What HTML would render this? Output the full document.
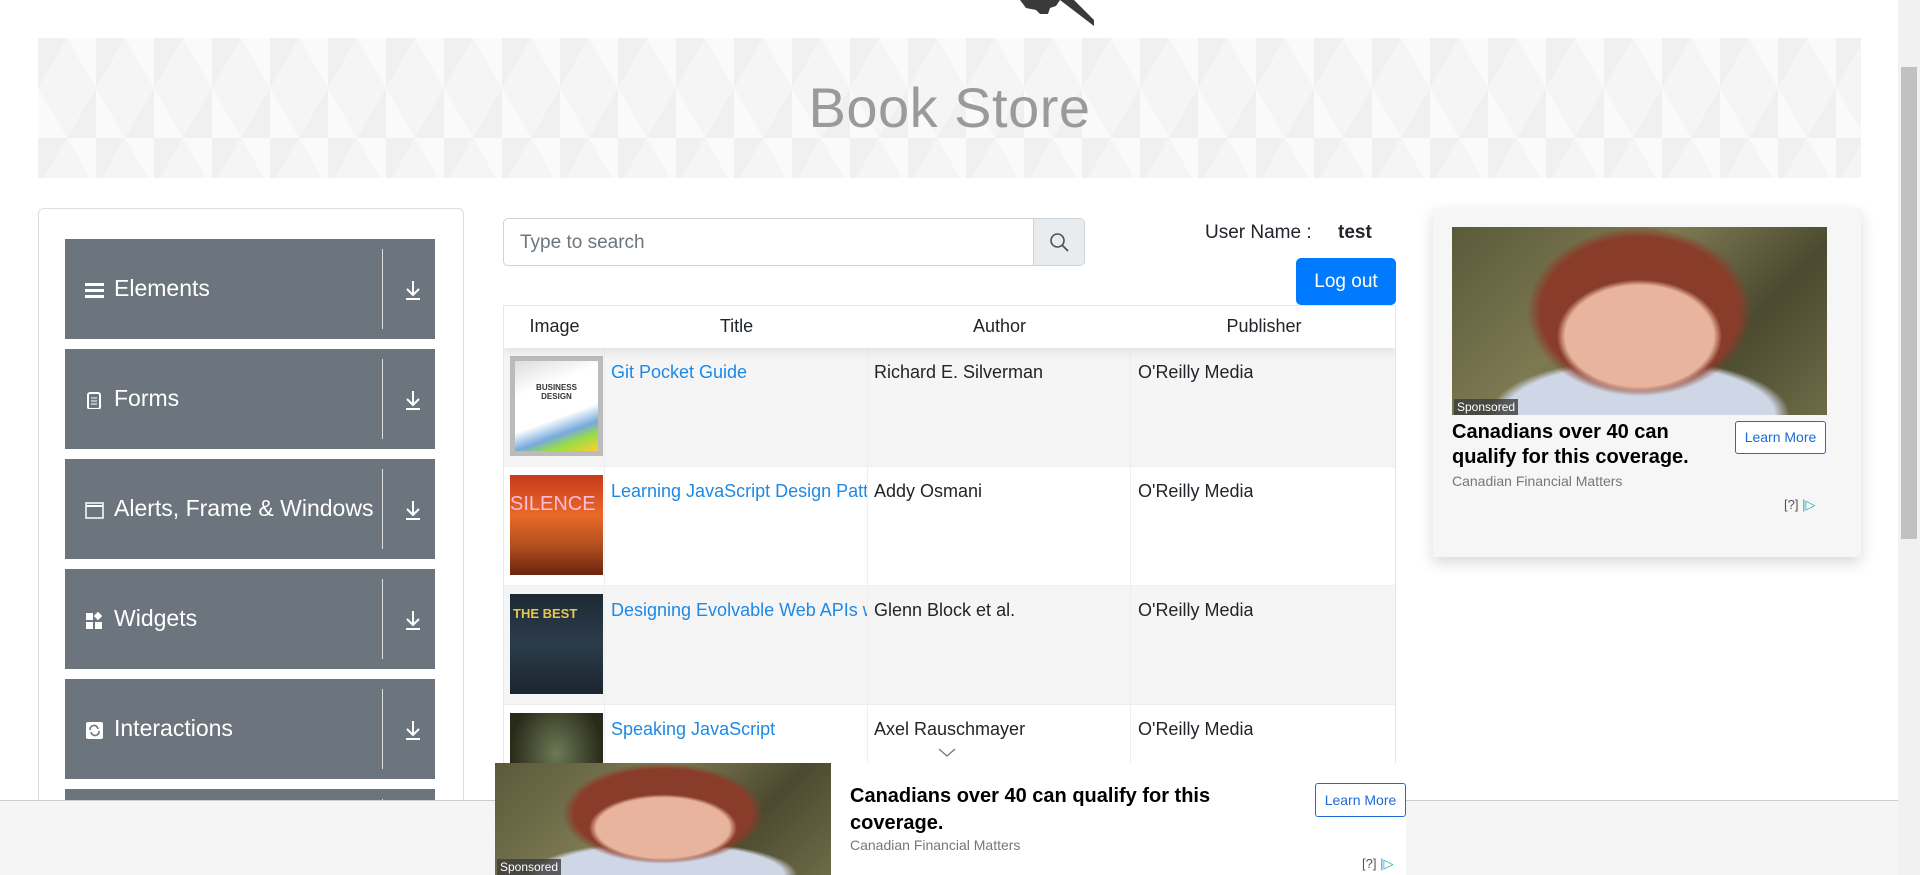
<!DOCTYPE html>
<html><head><meta charset="utf-8"><style>
*{box-sizing:border-box;margin:0;padding:0}
html,body{width:1920px;height:875px;overflow:hidden}
body{background:#fff;font-family:"Liberation Sans",sans-serif;position:relative;color:#212529}
.abs{position:absolute}
.banner{left:38px;top:38px;width:1823px;height:140px;background-color:#f5f5f5;background-image:linear-gradient(60deg,rgba(255,255,255,.5) 25%,transparent 25%,transparent 75%,rgba(255,255,255,.5) 75%),linear-gradient(-60deg,rgba(236,236,236,.5) 25%,transparent 25%,transparent 75%,rgba(236,236,236,.5) 75%);background-size:58px 100px}
.banner h1{font-weight:300;font-size:56px;color:#9a9a9a;text-align:center;line-height:140px;letter-spacing:.5px}
.side{left:38px;top:208px;width:426px;height:700px;border:1px solid #ddd;border-radius:6px}
.item{left:65px;width:370px;height:100px;background:#6c757d;color:#fff;font-size:23px}
.item .t{position:absolute;left:49px;top:36px;white-space:nowrap}
.item .ic{position:absolute;left:20px;top:43px;width:19px;height:17px}
.item .dv{position:absolute;left:317px;top:10px;width:1px;height:80px;background:#ddd}
.item .ar{position:absolute;left:339px;top:40px;width:18px;height:22px}
.search{left:503px;top:218px;width:582px;height:48px;border:1px solid #ced4da;border-radius:5px;overflow:hidden}
.search span{position:absolute;left:16px;top:13px;color:#6c757d;font-size:19px}
.search .b{position:absolute;right:0;top:0;width:51px;height:46px;background:#e9ecef;border-left:1px solid #ced4da}
.tbl{left:503px;top:305px;width:893px;height:470px;border:1px solid #e6e6e6;overflow:hidden}
.hd{position:absolute;left:0;top:0;width:893px;height:42px;box-shadow:0 4px 10px rgba(0,0,0,.08);background:#fff;z-index:2}
.col{position:absolute;top:0;height:100%;border-right:1px solid #eee}
.hd div{position:absolute;top:10px;font-size:18px;text-align:center}
.row{position:absolute;left:0;width:893px;height:119px;border-bottom:1px solid #eee}
.row .c{position:absolute;top:14px;font-size:18px;white-space:nowrap;overflow:hidden}
.row a{color:#1e88e5;text-decoration:none}
.cv{position:absolute;left:6px;top:8px;width:93px;height:100px}
.ad{left:1433px;top:208px;width:428px;height:349px;background:#f6f6f6;box-shadow:0 6px 14px rgba(0,0,0,.15)}
.photo{background:radial-gradient(ellipse 22% 30% at 50% 58%,#e8b49d 0 90%,transparent 100%),radial-gradient(ellipse 30% 45% at 50% 45%,#8a3c2a 0 88%,transparent 100%),radial-gradient(ellipse 40% 30% at 50% 100%,#cfd6e6 0 90%,transparent 100%),linear-gradient(135deg,#5a5a3a,#7d7a52 40%,#4b4a30 70%,#6e6b47)}
.spons{position:absolute;left:2px;bottom:0;background:rgba(60,60,60,.8);color:#fff;font-size:12px;padding:1px 3px}
.lm{position:absolute;border:1px solid #1e6bd6;color:#1e6bd6;border-radius:3px;font-size:14px;text-align:center;background:#fff}
</style></head><body>
<svg class="abs" style="left:1016px;top:0" width="80" height="26" viewBox="0 0 80 26"><path d="M4 0 H44 L40 6 L34 8 L32 14 L24 14 L20 10 L10 8 Z" fill="#3a3a3a"/><path d="M44 0 H58 L78 20 V26 Z" fill="#3a3a3a"/></svg>
<div class="abs banner"><h1>Book Store</h1></div>
<div class="abs side"></div>
<div class="abs item" style="top:239px"><svg class="ic" viewBox="0 0 19 17"><rect y="1" width="19" height="3" fill="#fff"/><rect y="7" width="19" height="3" fill="#fff"/><rect y="13" width="19" height="3" fill="#fff"/></svg><span class="t">Elements</span><div class="dv"></div><svg class="ar" viewBox="0 0 18 22"><path d="M9 2v14M3 10l6 6 6-6M2 20h14" stroke="#fff" stroke-width="2" fill="none"/></svg></div>
<div class="abs item" style="top:349px"><svg class="ic" viewBox="0 0 19 17"><rect x="3" y="1" width="12" height="16" rx="2" stroke="#fff" stroke-width="2" fill="none"/><path d="M6 6h6M6 9h6M6 12h6" stroke="#fff"/></svg><span class="t">Forms</span><div class="dv"></div><svg class="ar" viewBox="0 0 18 22"><path d="M9 2v14M3 10l6 6 6-6M2 20h14" stroke="#fff" stroke-width="2" fill="none"/></svg></div>
<div class="abs item" style="top:459px"><svg class="ic" viewBox="0 0 19 17"><rect x="1" y="1" width="17" height="15" stroke="#fff" stroke-width="1.5" fill="none"/><path d="M1 4h17" stroke="#fff" stroke-width="2"/></svg><span class="t">Alerts, Frame &amp; Windows</span><div class="dv"></div><svg class="ar" viewBox="0 0 18 22"><path d="M9 2v14M3 10l6 6 6-6M2 20h14" stroke="#fff" stroke-width="2" fill="none"/></svg></div>
<div class="abs item" style="top:569px"><svg class="ic" viewBox="0 0 19 17"><rect x="1" y="1" width="7" height="7" fill="#fff"/><rect x="1" y="10" width="7" height="7" fill="#fff"/><rect x="10" y="10" width="7" height="7" fill="#fff"/><rect x="10" y="1" width="6" height="6" fill="#fff" transform="rotate(45 13 4)"/></svg><span class="t">Widgets</span><div class="dv"></div><svg class="ar" viewBox="0 0 18 22"><path d="M9 2v14M3 10l6 6 6-6M2 20h14" stroke="#fff" stroke-width="2" fill="none"/></svg></div>
<div class="abs item" style="top:679px"><svg class="ic" viewBox="0 0 19 17"><rect x="1" y="0" width="17" height="17" rx="2" fill="#fff"/><path d="M5 8a4 4 0 0 1 8-1M14 9a4 4 0 0 1-8 1" stroke="#6c757d" stroke-width="1.6" fill="none"/></svg><span class="t">Interactions</span><div class="dv"></div><svg class="ar" viewBox="0 0 18 22"><path d="M9 2v14M3 10l6 6 6-6M2 20h14" stroke="#fff" stroke-width="2" fill="none"/></svg></div>
<div class="abs item" style="top:789px"><div class="dv"></div></div>

<div class="abs search"><span>Type to search</span><div class="b"><svg style="position:absolute;left:15px;top:13px" width="21" height="21" viewBox="0 0 21 21"><circle cx="8.5" cy="8.5" r="6.5" stroke="#495057" stroke-width="1.6" fill="none"/><path d="M13 13l6 6" stroke="#495057" stroke-width="1.8"/></svg></div></div>
<div class="abs" style="left:1205px;top:222px;font-size:19px">User Name :</div>
<div class="abs" style="left:1338px;top:222px;font-size:19px;font-weight:bold">test</div>
<div class="abs" style="left:1296px;top:258px;width:100px;height:47px;background:#007bff;border-radius:5px;color:#fff;font-size:19px;text-align:center;line-height:47px">Log out</div>

<div class="abs tbl">
<div class="row" style="top:42px;background:#f5f5f5"><div class="cv" style="background:linear-gradient(160deg,#ddd,#fff 30%,#fff 60%,#7ad 75%,#9d4 85%,#fc3);border:5px solid #bbb"><div style="font-size:8px;font-weight:bold;text-align:center;margin-top:22px;color:#333">BUSINESS<br>DESIGN</div></div><div class="c" style="left:107px"><a>Git Pocket Guide</a></div><div class="c" style="left:370px">Richard E. Silverman</div><div class="c" style="left:634px">O'Reilly Media</div></div>
<div class="row" style="top:161px;background:#fff"><div class="cv" style="background:linear-gradient(#c83a1a,#e86a28 40%,#b3501e 70%,#6a2410);color:#fbd;font-size:20px;padding-top:18px">SILENCE</div><div class="c" style="left:107px;width:256px"><a>Learning JavaScript Design Patterns</a></div><div class="c" style="left:370px">Addy Osmani</div><div class="c" style="left:634px">O'Reilly Media</div></div>
<div class="row" style="top:280px;background:#f5f5f5"><div class="cv" style="background:linear-gradient(#1d2a36,#2b3c48 50%,#1a2530);color:#e8c84a;font-size:13px;font-weight:bold;padding:12px 3px">THE BEST</div><div class="c" style="left:107px;width:256px"><a>Designing Evolvable Web APIs with ASP.NET</a></div><div class="c" style="left:370px">Glenn Block et al.</div><div class="c" style="left:634px">O'Reilly Media</div></div>
<div class="row" style="top:399px;background:#fff"><div class="cv" style="background:radial-gradient(ellipse at 50% 40%,#6b7a55,#2a2a1a 70%)"></div><div class="c" style="left:107px"><a>Speaking JavaScript</a></div><div class="c" style="left:370px">Axel Rauschmayer</div><div class="c" style="left:634px">O'Reilly Media</div></div>
<div class="hd"><div style="left:0;width:101px">Image</div><div style="left:101px;width:263px">Title</div><div style="left:364px;width:263px">Author</div><div style="left:627px;width:266px">Publisher</div></div>
<div class="col" style="left:100px"></div><div class="col" style="left:363px"></div><div class="col" style="left:626px"></div>
</div>
<svg class="abs" style="left:938px;top:748px" width="18" height="10" viewBox="0 0 18 10"><path d="M1 1l8 7 8-7" stroke="#777" stroke-width="1.3" fill="none"/></svg>

<div class="abs ad">
<div class="abs photo" style="left:19px;top:19px;width:375px;height:188px"><span class="spons">Sponsored</span></div>
<div class="abs" style="left:19px;top:212px;width:270px;font-size:20px;font-weight:bold;line-height:25px;color:#000">Canadians over 40 can qualify for this coverage.</div>
<div class="lm" style="left:302px;top:213px;width:91px;height:33px;line-height:31px">Learn More</div>
<div class="abs" style="left:19px;top:265px;font-size:14px;color:#777">Canadian Financial Matters</div>
<div class="abs" style="left:351px;top:289px;font-size:13px;color:#555">[?] <span style="color:#2ab">|▷</span></div>
</div>

<div class="abs" style="left:0;top:800px;width:1898px;height:75px;background:#f5f5f5;border-top:1px solid #ccc;z-index:5"></div>
<div class="abs" style="left:495px;top:763px;width:911px;height:112px;background:#fff;z-index:6">
<div class="abs photo" style="left:0;top:0;width:336px;height:112px"><span class="spons">Sponsored</span></div>
<div class="abs" style="left:355px;top:20px;width:370px;font-size:20px;font-weight:bold;line-height:27px;color:#000">Canadians over 40 can qualify for this coverage.</div>
<div class="lm" style="left:820px;top:20px;width:91px;height:34px;line-height:32px">Learn More</div>
<div class="abs" style="left:355px;top:74px;font-size:14px;color:#777">Canadian Financial Matters</div>
<div class="abs" style="left:867px;top:93px;font-size:13px;color:#555">[?] <span style="color:#2ab">|▷</span></div>
</div>

<div class="abs" style="left:1898px;top:0;width:22px;height:875px;background:#f1f1f1;z-index:7"></div>
<div class="abs" style="left:1901px;top:67px;width:16px;height:472px;background:#c1c1c1;z-index:8"></div>
</body></html>
